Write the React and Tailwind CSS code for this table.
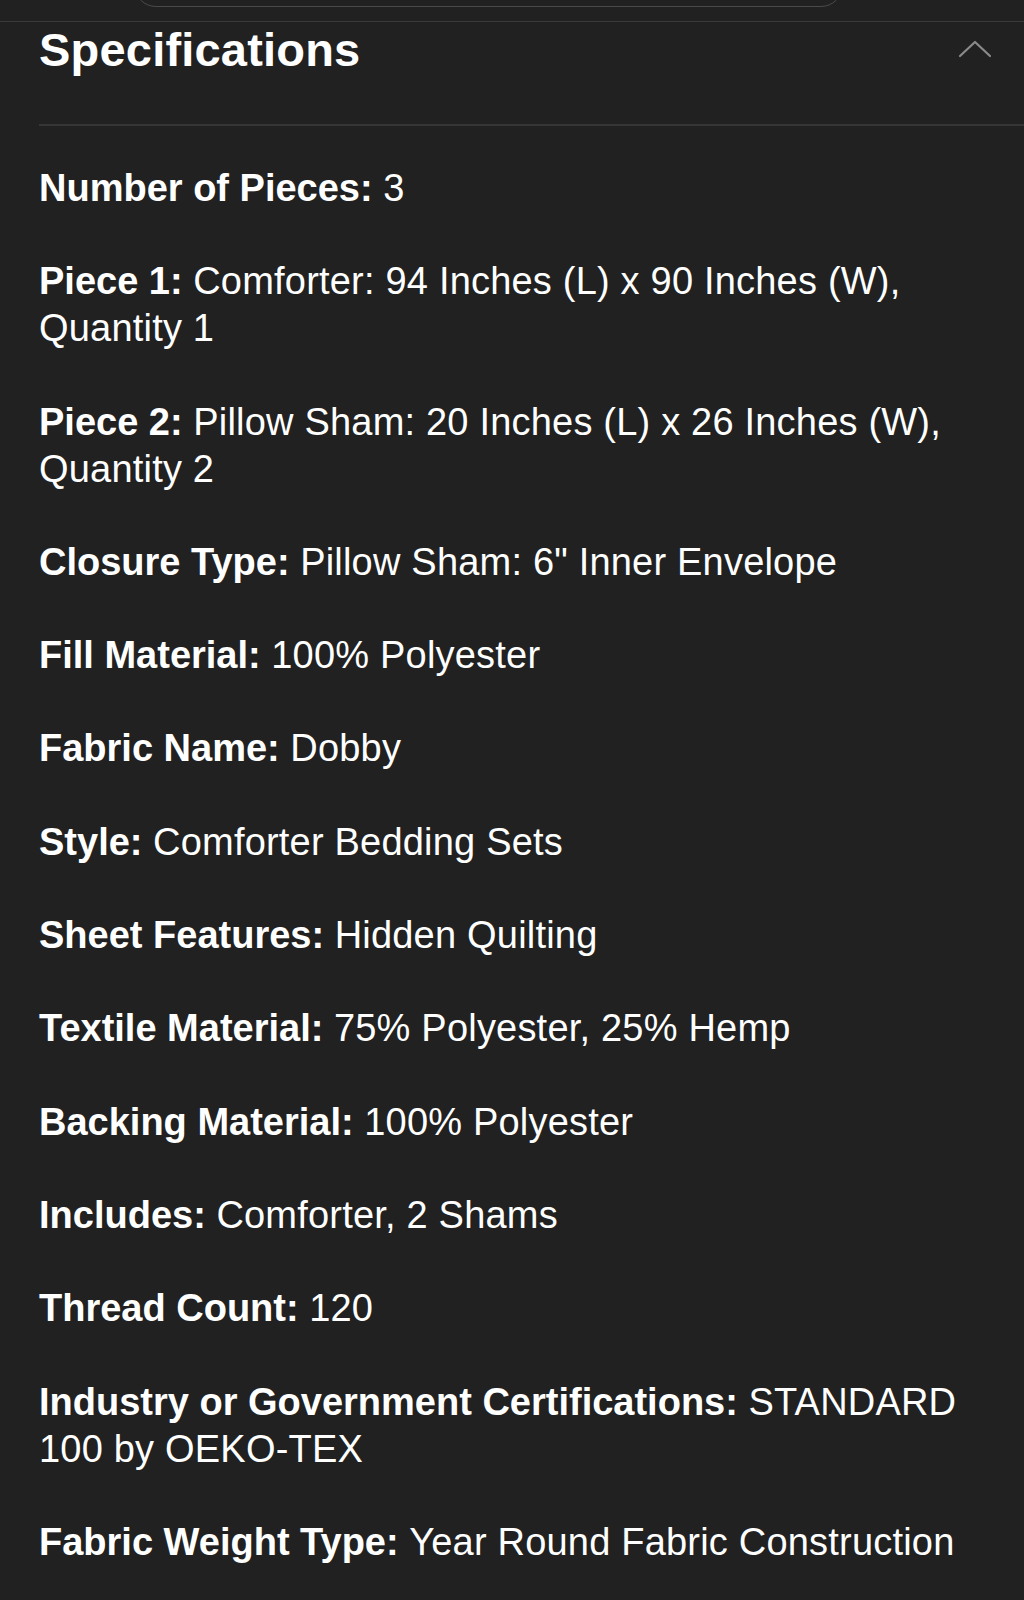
export default function App() {
  const specs = [
    ["Number of Pieces:", "3"],
    ["Piece 1:", "Comforter: 94 Inches (L) x 90 Inches (W), Quantity 1"],
    ["Piece 2:", "Pillow Sham: 20 Inches (L) x 26 Inches (W), Quantity 2"],
    ["Closure Type:", 'Pillow Sham: 6" Inner Envelope'],
    ["Fill Material:", "100% Polyester"],
    ["Fabric Name:", "Dobby"],
    ["Style:", "Comforter Bedding Sets"],
    ["Sheet Features:", "Hidden Quilting"],
    ["Textile Material:", "75% Polyester, 25% Hemp"],
    ["Backing Material:", "100% Polyester"],
    ["Includes:", "Comforter, 2 Shams"],
    ["Thread Count:", "120"],
    ["Industry or Government Certifications:", "STANDARD 100 by OEKO-TEX"],
    ["Fabric Weight Type:", "Year Round Fabric Construction"],
  ];
  return (
    <div
      className="w-[1024px] min-h-[1600px] bg-[#212121] text-white overflow-hidden"
      style={{ fontFamily: '"Liberation Sans", Arial, sans-serif' }}
    >
      <div className="h-[21px] overflow-hidden pl-[134px] pr-[181px]">
        <div className="h-[47px] -mt-[40px] rounded-[22px] border border-[#4a4a4a]"></div>
      </div>
      <div className="h-px bg-[#3a3a3a]"></div>
      <div className="pl-[39px]">
        <div className="flex items-start justify-between pr-[32px] h-[56px]">
          <h2 className="text-[47px] leading-[56px] font-bold tracking-[0.2px]">Specifications</h2>
          <svg width="34" height="18" viewBox="0 0 34 18" className="mt-[18px]">
            <path d="M2 16 L17 2 L32 16" fill="none" stroke="#8a8a8a" strokeWidth="2.2" strokeLinecap="round" strokeLinejoin="round" />
          </svg>
        </div>
        <div className="h-[2px] bg-[#363636] mt-[46px]"></div>
        <div className="pr-[40px] pt-[39px]">
          {specs.map(([k, v], i) => (
            <p key={i} className="text-[38px] leading-[47px] mb-[46.3px]">
              <span className="font-bold">{k}</span>{" "}
              <span className="tracking-[0.2px]">{v}</span>
            </p>
          ))}
        </div>
      </div>
    </div>
  );
}
